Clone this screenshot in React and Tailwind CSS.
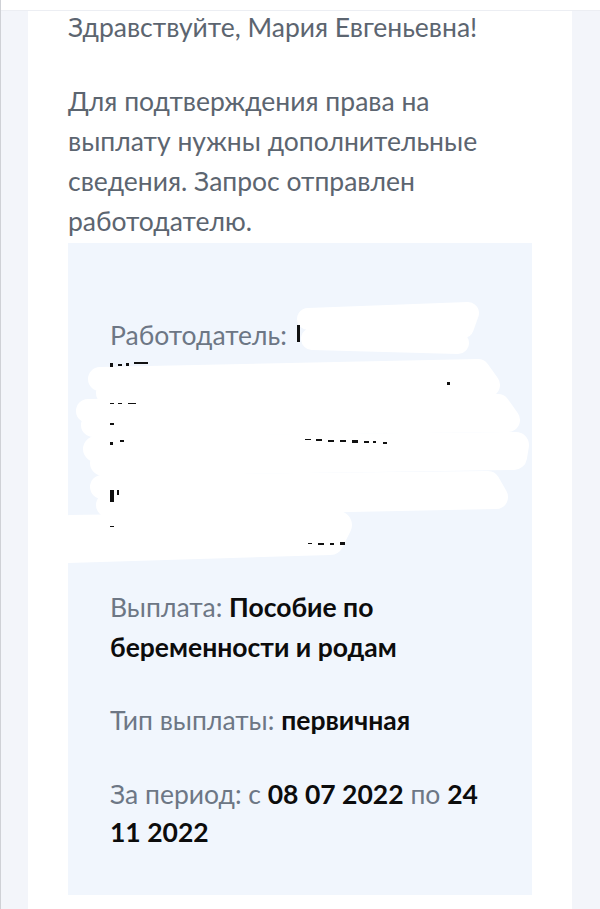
import React from 'react';

const Scribble = () => (
  <svg className="absolute inset-0 w-full h-full pointer-events-none" viewBox="0 0 464 652" preserveAspectRatio="none">
    {/* white marker strokes */}
    <g stroke="#ffffff" strokeLinecap="round" strokeLinejoin="round" fill="none">
      <path d="M240 76 L400 70 L395 84 L244 96 L390 100" strokeWidth="22" />
      <path d="M32 136 L410 128 L420 142 L40 150 L405 151" strokeWidth="24" />
      <path d="M20 168 L430 163 L440 177 L25 182" strokeWidth="24" />
      <path d="M28 206 L448 202 L446 214 L35 220" strokeWidth="26" />
      <path d="M34 244 L420 240 L428 254 L40 262" strokeWidth="24" />
      <path d="M2 286 L270 282 L262 298 L0 306" strokeWidth="28" />
    </g>
    {/* black remnants of the redacted employer text */}
    <g fill="#111">
      <rect x="229" y="82" width="3" height="17" />
      <rect x="42" y="120" width="3" height="4" />
      <rect x="50" y="121" width="4" height="2" />
      <rect x="58" y="120" width="3" height="3" />
      <rect x="66" y="119" width="14" height="2" />
      <rect x="379" y="139" width="3" height="3" />
      <rect x="42" y="160" width="4" height="1" />
      <rect x="50" y="160" width="4" height="1" />
      <rect x="60" y="160" width="8" height="1" />
      <rect x="42" y="180" width="4" height="2" />
      <rect x="42" y="199" width="3" height="3" />
      <rect x="52" y="197" width="4" height="2" />
      <rect x="237" y="196" width="6" height="1" />
      <rect x="248" y="196" width="6" height="2" />
      <rect x="260" y="197" width="6" height="2" />
      <rect x="272" y="197" width="6" height="2" />
      <rect x="284" y="197" width="6" height="3" />
      <rect x="296" y="198" width="5" height="2" />
      <rect x="305" y="198" width="3" height="2" />
      <rect x="315" y="199" width="4" height="2" />
      <rect x="42" y="247" width="4" height="12" />
      <rect x="49" y="247" width="2" height="5" />
      <rect x="42" y="283" width="4" height="1" />
      <rect x="240" y="300" width="4" height="1" />
      <rect x="250" y="300" width="6" height="2" />
      <rect x="262" y="300" width="4" height="2" />
      <rect x="272" y="299" width="5" height="3" />
    </g>
  </svg>
);

const Row = ({ label, children, className = '' }) => (
  <p className={`text-[#6d7785] ${className}`}>
    {label} {children}
  </p>
);

const App = () => {
  return (
    <div
      className="relative w-full h-[909px] overflow-hidden bg-[#f3f5fa] border-l border-[#cfd1d6] flex"
      style={{ fontFamily: 'Lato, "Noto Sans", sans-serif' }}
    >
      <div className="absolute top-0 left-0 right-0 h-[11px] bg-white border-b border-[#eceef3] z-10" />

      <div className="w-[27px] shrink-0" />

      <div className="flex-1 bg-white px-[40px] pt-[7px]">
        <p className="text-[26.5px] leading-[40px] text-[#5c6570]">Здравствуйте, Мария Евгеньевна!</p>

        <p className="mt-[34px] text-[26.5px] leading-[40px] text-[#5c6570]">
          Для подтверждения права на выплату нужны дополнительные сведения. Запрос отправлен работодателю.
        </p>

        <div className="relative mt-[2px] h-[652px] bg-[#f1f6fd] px-[42px] pt-[72px] text-[26.5px] leading-[40px] overflow-hidden">
          <div className="h-[272px]">
            <Row label="Работодатель:" />
          </div>
          <Scribble />

          <Row label="Выплата:">
            <span className="font-bold text-[#0c0c0c]">Пособие по беременности и родам</span>
          </Row>

          <Row label="Тип выплаты:" className="mt-[33px]">
            <span className="font-bold text-[#0c0c0c]">первичная</span>
          </Row>

          <p className="mt-[35px] text-[#6d7785] leading-[38px]">
            За период: с <span className="font-bold text-[#0c0c0c]">08 07 2022</span> по{' '}
            <span className="font-bold text-[#0c0c0c]">24 11 2022</span>
          </p>
        </div>
      </div>

      <div className="w-[28px] shrink-0" />
    </div>
  );
};

export default App;
